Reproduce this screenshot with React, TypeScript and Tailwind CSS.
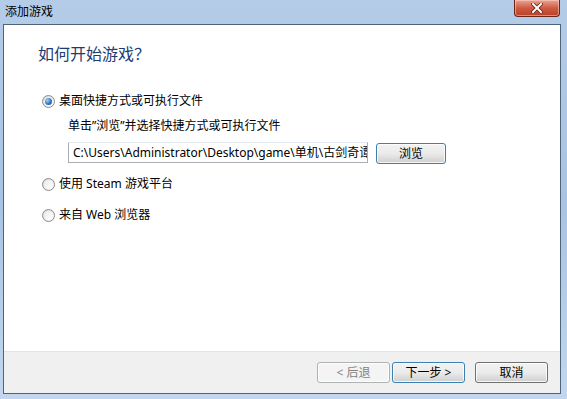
import React from "react";

const font = { fontFamily: '"Noto Sans", "Noto Sans CJK SC", sans-serif' };

function Radio({ checked }: { checked?: boolean }) {
  return (
    <div className="w-[13px] h-[13px] rounded-full border border-[#8d8d8d] bg-gradient-to-br from-[#d6d6d6] to-[#fbfbfb] flex items-center justify-center shrink-0">
      <div className="w-[9px] h-[9px] rounded-full bg-gradient-to-br from-[#eaeaea] to-[#ffffff] flex items-center justify-center">
        {checked && (
          <div className="w-[7px] h-[7px] rounded-full bg-[radial-gradient(circle_at_35%_35%,#9fd3f7,#2a6bbf_60%,#1b4e9a)]" />
        )}
      </div>
    </div>
  );
}

function Btn({ children, w, disabled, focus }: { children: React.ReactNode; w: string; disabled?: boolean; focus?: boolean }) {
  return (
    <div
      className={`${w} h-[21px] rounded-[3px] border ${
        disabled
          ? "border-[#adb2b5] bg-[#f4f4f4] text-[#838383]"
          : focus
          ? "border-[#3c7fb1] bg-gradient-to-b from-[#f2f2f2] via-[#ebebeb] to-[#cfcfcf] text-black"
          : "border-[#707070] bg-gradient-to-b from-[#f2f2f2] via-[#ebebeb] to-[#cfcfcf] text-black"
      } flex items-center justify-center text-[12px] leading-none shadow-[inset_0_0_0_1px_rgba(255,255,255,0.8)]`}
    >
      {children}
    </div>
  );
}

export default function App() {
  return (
    <div
      className="w-[567px] h-[399px] overflow-hidden flex flex-col bg-gradient-to-b from-[#b4cce8] via-[#a8c3e3] to-[#c2d7ef]"
      style={font}
    >
      <div className="h-[24px] flex items-start justify-between shrink-0">
        <div className="pl-[5px] pt-[4px] text-[12px] leading-[16px] text-black">添加游戏</div>
        <div className="mr-[7px] w-[46px] h-[17px] rounded-b-[4px] border border-t-0 border-[#6b2418] bg-gradient-to-b from-[#e8a493] via-[#cf5a42] to-[#b8402a] flex items-center justify-center shadow-[inset_0_0_0_1px_rgba(255,220,210,0.5)]">
          <svg width="12" height="10" viewBox="0 0 12 10">
            <path d="M2 1 L10 9 M10 1 L2 9" stroke="#5a1a10" strokeWidth="3.4" strokeLinecap="square" />
            <path d="M2 1 L10 9 M10 1 L2 9" stroke="#ffffff" strokeWidth="2" strokeLinecap="square" />
          </svg>
        </div>
      </div>
      <div className="ml-[3px] mr-[6px] h-[370px] border border-[#4f6379] bg-white flex flex-col shrink-0">
        <div className="flex-1 flex flex-col">
          <div className="pl-[34px] pt-[19px] text-[16px] leading-[20px] text-[#1d3a73]">如何开始游戏？</div>
          <div className="mt-[29px] ml-[38px] flex items-center h-[16px] gap-[4px] text-[12px] text-black">
            <Radio checked />
            <span>桌面快捷方式或可执行文件</span>
          </div>
          <div className="mt-[9px] ml-[64px] h-[16px] text-[12px] leading-[16px] text-black">
            单击”浏览”并选择快捷方式或可执行文件
          </div>
          <div className="mt-[8px] ml-[64px] flex items-start">
            <div className="w-[300px] h-[21px] border border-[#abadb3] border-t-[#e3e9ef] bg-white flex items-center pl-[4px] overflow-hidden whitespace-nowrap text-[12px] text-black">
              C:\Users\Administrator\Desktop\game\单机\古剑奇谭2
            </div>
            <div className="ml-[8px] mt-[1px]">
              <Btn w="w-[70px]" focus>
                浏览
              </Btn>
            </div>
          </div>
          <div className="mt-[12px] ml-[38px] flex items-center h-[16px] gap-[4px] text-[12px] text-black">
            <Radio />
            <span>使用 Steam 游戏平台</span>
          </div>
          <div className="mt-[15px] ml-[38px] flex items-center h-[16px] gap-[4px] text-[12px] text-black">
            <Radio />
            <span>来自 Web 浏览器</span>
          </div>
        </div>
        <div className="h-[42px] bg-[#f0f0f0] border-t border-[#e3e3e3] flex items-start justify-end pt-[10px] pr-[12px]">
          <Btn w="w-[73px]" disabled>
            &lt; 后退
          </Btn>
          <div className="ml-[2px]">
            <Btn w="w-[73px]" focus>
              下一步 &gt;
            </Btn>
          </div>
          <div className="ml-[10px]">
            <Btn w="w-[73px]">取消</Btn>
          </div>
        </div>
      </div>
    </div>
  );
}
